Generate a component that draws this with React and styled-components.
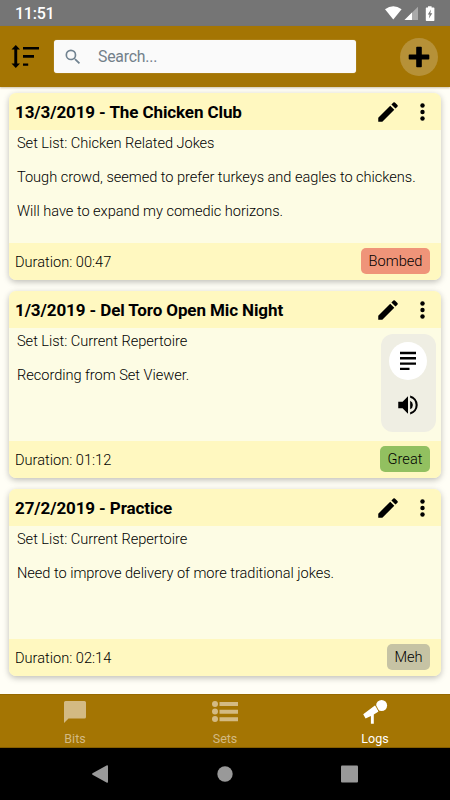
import React from 'react';
import styled, { createGlobalStyle } from 'styled-components';

const GlobalStyle = createGlobalStyle`
  * { box-sizing: border-box; }
  body { margin: 0; font-family: Roboto, sans-serif; color: #000; }
  button { border: 0; padding: 0; background: none; font: inherit; color: #000; }
  svg { display: block; flex: none; }
`;

const Screen = styled.div`
  width: 450px;
  height: 800px;
  display: flex;
  flex-direction: column;
  overflow: hidden;
  background: #fffef6;
`;

const StatusBar = styled.div`
  height: 26px;
  flex: none;
  display: flex;
  align-items: center;
  justify-content: space-between;
  padding: 2px 15px 0 15px;
  background: #757575;
  color: #fff;
  font-size: 16px;
  font-weight: 500;
  line-height: 24px;
  letter-spacing: -0.25px;
`;

const Header = styled.header`
  height: 61px;
  flex: none;
  display: flex;
  align-items: center;
  padding: 0 12px 0 11px;
  background: #a47503;
  box-shadow: 0 1px 2px rgba(90, 60, 0, 0.3);
`;

const SortButton = styled.button`
  width: 43px;
  display: flex;
`;

const SearchBox = styled.div`
  width: 302px;
  height: 33px;
  display: flex;
  align-items: center;
  gap: 15px;
  padding: 1px 0 0 9px;
  border-radius: 3px;
  background: #fafafa;
  box-shadow: 0 0 1px rgba(255, 255, 255, 0.7);
  color: #73808a;
  font-size: 15.8px;
  line-height: 20px;
  letter-spacing: -0.2px;
`;

const AddButton = styled.button`
  width: 38px;
  height: 38px;
  margin-left: auto;
  display: grid;
  place-items: center;
  border-radius: 50%;
  background: #b69138;
`;

const LogList = styled.main`
  flex: 1;
  min-height: 0;
  display: flex;
  flex-direction: column;
  gap: 11px;
  padding: 6px 9px 0;
`;

const Card = styled.article`
  height: 187px;
  flex: none;
  display: flex;
  flex-direction: column;
  border-radius: 7px;
  overflow: hidden;
  background: #fdfce4;
  box-shadow: 0 2px 6px rgba(0, 0, 0, 0.26);
`;

const CardHeader = styled.div`
  height: 37px;
  display: flex;
  align-items: center;
  padding: 1px 11px 0 6px;
  background: #fff8c0;
`;

const CardTitle = styled.h2`
  margin: 0 auto 0 0;
  font-size: 17px;
  font-weight: 700;
  line-height: 22px;
  letter-spacing: -0.1px;
`;

const CardActions = styled.div`
  display: flex;
  align-items: center;
  gap: 14.5px;
`;

const CardBody = styled.div`
  flex: 1;
  display: flex;
  justify-content: space-between;
  padding: 3px 5px 0 8px;
`;

const Notes = styled.div`
  display: flex;
  flex-direction: column;
  gap: 14px;
  font-size: 14.6px;
  font-weight: 300;
  line-height: 20px;
  letter-spacing: -0.035px;
  white-space: nowrap;

  p { margin: 0; }
`;

const CardFooter = styled.div`
  height: 37px;
  display: flex;
  align-items: center;
  justify-content: space-between;
  padding: 0 11px 0 6px;
  background: #fff8c0;
  font-size: 14.6px;
  font-weight: 300;
`;

const Rating = styled.span`
  height: 26px;
  width: ${(p) => p.$width}px;
  margin-bottom: 1px;
  text-align: center;
  border-radius: 5px;
  background: ${(p) => p.$color};
  line-height: 27px;
`;

const ViewToggle = styled.div`
  width: 55px;
  height: 98px;
  margin-top: 3px;
  padding: 8px 1px 0 0;
  display: flex;
  flex-direction: column;
  align-items: center;
  gap: 6px;
  border-radius: 12px;
  background: #efeee3;
`;

const ToggleOption = styled.button`
  width: 38px;
  height: 38px;
  display: grid;
  place-items: center;
  border-radius: 50%;
  background: ${(p) => (p.$active ? '#fff' : 'transparent')};
`;

const TabBar = styled.nav`
  height: 54px;
  flex: none;
  display: grid;
  grid-template-columns: repeat(3, 1fr);
  background: #a47503;
  border-top: 1px solid #966900;
  border-bottom: 1px solid #845d00;
`;

const Tab = styled.button`
  display: flex;
  flex-direction: column;
  align-items: center;
  padding-top: 3px;
  color: ${(p) => (p.$active ? '#fff' : '#d3ba83')};
  font-size: 12.5px;
  line-height: 16px;

  svg { margin-bottom: 7px; }
`;

const SystemNav = styled.div`
  height: 52px;
  flex: none;
  display: grid;
  grid-template-columns: 124px 126px 124px;
  justify-content: center;
  align-items: center;
  justify-items: center;
  background: #000;
`;

const StatusIcons = () => (
  <svg width="52" height="20" viewBox="383 4 52 20">
    <path fill="#fff" d="M385 9.300Q393.300 3.200 401.600 9.300L393.300 19.600Z" />
    <path fill="#aaa" d="M418 6.800V20H404.500Z" />
    <path fill="#fff" d="M412 12.600V20H404.500Z" />
    <path fill="#fff" d="M428 6.300h3.600v1.200h2.100q.7 0 .7.7v12q0 .7-.7.7h-7.200q-.7 0-.7-.7v-12q0-.7.7-.7h1.500z" />
    <path fill="#757575" d="M431 9.400l-3.200 5h1.800l-.7 4.200 3.400-5.400h-2z" />
  </svg>
);

const SortIcon = () => (
  <svg width="30" height="26" viewBox="11 43 30 26">
    <path d="M15.800 44l4.200 4.600h-2.800v14h2.800L15.800 67l-4.300-4.400h2.800v-14h-2.800z" />
    <path d="M23 46h16v2.400H23zM23 54.100h11v2.700H23zM23 62.400h5.200v2.400H23z" />
  </svg>
);

const SearchIcon = () => (
  <svg width="20" height="20" viewBox="0 0 24 24" fill="#718391">
    <path d="M15.500 14h-.79l-.28-.27A6.470 6.470 0 0 0 16 9.500 6.500 6.500 0 1 0 9.500 16c1.610 0 3.090-.59 4.230-1.570l.27.28v.79l5 4.990L20.490 19zm-6 0a4.500 4.500 0 1 1 0-9 4.500 4.500 0 0 1 0 9z" />
  </svg>
);

const PlusIcon = () => (
  <svg width="22" height="22" viewBox="0 0 22 22">
    <path d="M9 .7h4q.8 0 .8.8v6.900h6.700q.8 0 .8.8v3.500q0 .8-.8.8h-6.700v6.900q0 .8-.8.8H9q-.8 0-.8-.8v-6.900H1.500q-.8 0-.8-.8V9.200q0-.8.8-.8h6.700V1.500Q8.200.7 9 .7z" />
  </svg>
);

const PencilIcon = () => (
  <svg width="26" height="26" viewBox="0 0 24 24">
    <path d="M3 17.250V21h3.750L17.810 9.940l-3.750-3.750zM20.710 7.040a1 1 0 0 0 0-1.410l-2.340-2.340a1 1 0 0 0-1.410 0l-1.830 1.830 3.750 3.750z" />
  </svg>
);

const MoreIcon = () => (
  <svg width="15" height="26" viewBox="0 0 15 26">
    <circle cx="7.500" cy="6.500" r="2.200" />
    <circle cx="7.500" cy="13" r="2.200" />
    <circle cx="7.500" cy="19.500" r="2.200" />
  </svg>
);

const LinesIcon = () => (
  <svg width="16" height="20" viewBox="0 0 16 20">
    <path d="M0 .8h16v2.400H0zM0 6.100h16v2.400H0zM0 11.400h16v2.400H0zM0 16.700h9.500v2.400H0z" />
  </svg>
);

const SpeakerIcon = () => (
  <svg width="26" height="26" viewBox="0 0 24 24">
    <path d="M3 9v6h4l5 5V4L7 9zm13.500 3A4.500 4.500 0 0 0 14 7.970v8.050A4.470 4.470 0 0 0 16.500 12zM14 3.230v2.060a7 7 0 0 1 0 13.420v2.060a9 9 0 0 0 0-17.540z" />
  </svg>
);

const BubbleIcon = () => (
  <svg width="26" height="26" viewBox="0 0 26 26" fill="currentColor">
    <path d="M3.500 3h19q1.500 0 1.500 1.500v14.500q0 1.500-1.500 1.500H6.500L2 25V4.500Q2 3 3.500 3z" />
  </svg>
);

const ListIcon = () => (
  <svg width="28" height="26" viewBox="0 0 28 26" fill="currentColor">
    <circle cx="4" cy="6" r="3" />
    <circle cx="4" cy="13.500" r="3" />
    <circle cx="4" cy="21" r="3" />
    <path d="M8.500 4H27v4H8.500zM8.500 11.700H27v4H8.500zM8.500 19.300H27v4H8.500z" />
  </svg>
);

const MicIcon = () => (
  <svg width="26" height="26" viewBox="0 0 26 26" fill="currentColor">
    <circle cx="19.600" cy="7.500" r="5.500" />
    <path d="M13.200 7.300l3.400 6.100-4.800 3v9.400H8.900V18l-5.300 2.500L1.200 16.300z" />
    <path d="M12.900 6l5 9" stroke="#a47503" strokeWidth="0.900" fill="none" />
  </svg>
);

const BackIcon = () => (
  <svg width="18" height="20" viewBox="0 0 18 20" fill="#999">
    <path d="M15.500 1.500Q17 .7 17 2.200v15.600q0 1.500-1.500.7L1.500 10.700q-1-.7 0-1.400z" />
  </svg>
);

const HomeIcon = () => (
  <svg width="16" height="16" viewBox="0 0 16 16" fill="#999"><circle cx="8" cy="8" r="7.700" /></svg>
);

const RecentsIcon = () => (
  <svg width="18" height="18" viewBox="0 0 18 18" fill="#999"><rect y="0.500" width="17" height="17" rx="1" /></svg>
);

const logs = [
  {
    title: '13/3/2019 - The Chicken Club',
    lines: [
      'Set List: Chicken Related Jokes',
      'Tough crowd, seemed to prefer turkeys and eagles to chickens.',
      'Will have to expand my comedic horizons.',
    ],
    duration: '00:47',
    rating: { label: 'Bombed', color: '#ef9479', width: 69 },
  },
  {
    title: '1/3/2019 - Del Toro Open Mic Night',
    lines: ['Set List: Current Repertoire', 'Recording from Set Viewer.'],
    duration: '01:12',
    rating: { label: 'Great', color: '#92c060', width: 50 },
    recorded: true,
  },
  {
    title: '27/2/2019 - Practice',
    lines: ['Set List: Current Repertoire', 'Need to improve delivery of more traditional jokes.'],
    duration: '02:14',
    rating: { label: 'Meh', color: '#c6c3a4', width: 43 },
  },
];

const LogCard = ({ log }) => (
  <Card>
    <CardHeader>
      <CardTitle>{log.title}</CardTitle>
      <CardActions>
        <button aria-label="Edit"><PencilIcon /></button>
        <button aria-label="More"><MoreIcon /></button>
      </CardActions>
    </CardHeader>
    <CardBody>
      <Notes>
        {log.lines.map((line) => <p key={line}>{line}</p>)}
      </Notes>
      {log.recorded && (
        <ViewToggle>
          <ToggleOption $active aria-label="Notes"><LinesIcon /></ToggleOption>
          <ToggleOption aria-label="Audio"><SpeakerIcon /></ToggleOption>
        </ViewToggle>
      )}
    </CardBody>
    <CardFooter>
      <span>Duration: {log.duration}</span>
      <Rating $color={log.rating.color} $width={log.rating.width}>{log.rating.label}</Rating>
    </CardFooter>
  </Card>
);

export default function App() {
  return (
    <>
      <GlobalStyle />
      <Screen>
        <StatusBar>
          <span>11:51</span>
          <StatusIcons />
        </StatusBar>
        <Header>
          <SortButton aria-label="Sort"><SortIcon /></SortButton>
          <SearchBox>
            <SearchIcon />
            <span>Search...</span>
          </SearchBox>
          <AddButton aria-label="Add"><PlusIcon /></AddButton>
        </Header>
        <LogList>
          {logs.map((log) => <LogCard key={log.title} log={log} />)}
        </LogList>
        <TabBar>
          <Tab><BubbleIcon />Bits</Tab>
          <Tab><ListIcon />Sets</Tab>
          <Tab $active><MicIcon />Logs</Tab>
        </TabBar>
        <SystemNav>
          <BackIcon />
          <HomeIcon />
          <RecentsIcon />
        </SystemNav>
      </Screen>
    </>
  );
}
